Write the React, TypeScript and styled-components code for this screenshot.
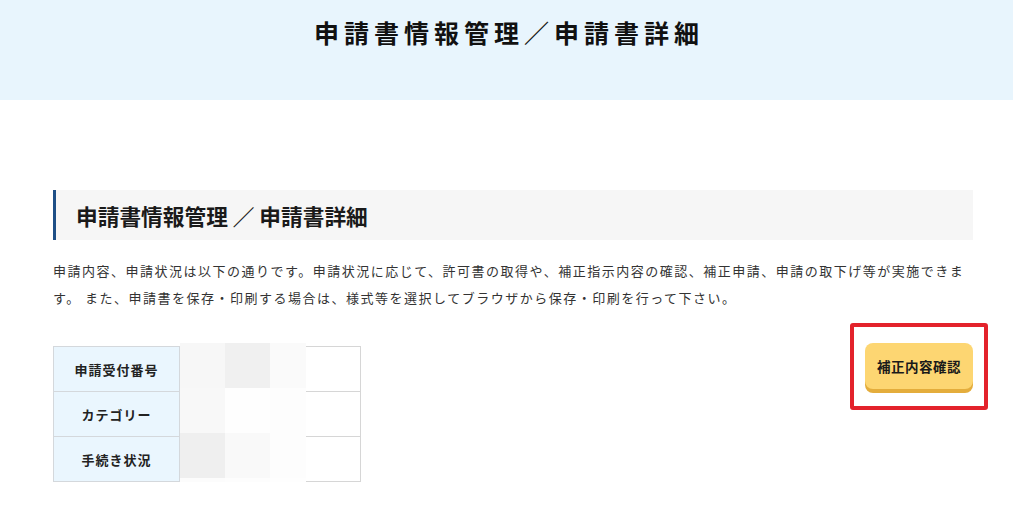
import styled, { createGlobalStyle } from "styled-components";

const GlobalStyle = createGlobalStyle`
  body {
    margin: 0;
    background: #ffffff;
    font-family: "Noto Sans CJK JP", "Noto Sans", sans-serif;
    color: #222222;
  }
`;

type Row = {
  label: string;
};

const rows: Row[] = [
  { label: "申請受付番号" },
  { label: "カテゴリー" },
  { label: "手続き状況" },
];

// ぼかし（モザイク）の色
const mosaic = [
  ["#f7f7f7", "#f0f0f0", "#fafafa"],
  ["#f8f8f8", "#fefefe", "#fdfdfd"],
  ["#efefef", "#f9f9f9", "#fdfdfd"],
  ["#fcfcfc", "#fdfdfd", "#fefefe"],
];

export default function App() {
  return (
    <>
      <GlobalStyle />
      <Header>
        <PageTitle>申請書情報管理／申請書詳細</PageTitle>
      </Header>
      <Contents>
        <SectionTitle>申請書情報管理 ／ 申請書詳細</SectionTitle>
        <Lead>
          申請内容、申請状況は以下の通りです。申請状況に応じて、許可書の取得や、補正指示内容の確認、補正申請、申請の取下げ等が実施できます。
          また、申請書を保存・印刷する場合は、様式等を選択してブラウザから保存・印刷を行って下さい。
        </Lead>
        <DetailRow>
          <TableWrap>
            <InfoTable>
              <tbody>
                {rows.map((row) => (
                  <tr key={row.label}>
                    <Th>{row.label}</Th>
                    <Td />
                  </tr>
                ))}
              </tbody>
            </InfoTable>
            <Mosaic>
              {mosaic.map((line, i) =>
                line.map((color, j) => (
                  <Tile key={`${i}-${j}`} $color={color} $short={i === 3} />
                ))
              )}
            </Mosaic>
          </TableWrap>
          <Highlight>
            <CorrectionButton type="button">補正内容確認</CorrectionButton>
          </Highlight>
        </DetailRow>
      </Contents>
    </>
  );
}

const Header = styled.header`
  height: 100px;
  background: #e8f5fd;
  display: flex;
  justify-content: center;
  padding-top: 13px;
  box-sizing: border-box;
`;

const PageTitle = styled.h1`
  margin: 0 0 0 5px;
  font-size: 25px;
  font-weight: 700;
  letter-spacing: 5px;
  line-height: 38px;
  color: #111111;
`;

const Contents = styled.main`
  width: 920px;
  margin: 90px 0 0 53px;
`;

const SectionTitle = styled.h2`
  margin: 0;
  height: 50px;
  display: flex;
  align-items: center;
  padding-left: 20px;
  background: #f6f6f6;
  border-left: 3px solid #1e4f86;
  font-size: 21.7px;
  font-weight: 700;
  color: #1a1a1a;
`;

const Lead = styled.p`
  margin: 17px 0 0;
  font-size: 13px;
  line-height: 27px;
  letter-spacing: 1.5px;
  color: #333333;
`;

const DetailRow = styled.div`
  margin-top: 32px;
  display: flex;
  justify-content: space-between;
  align-items: flex-start;
`;

const TableWrap = styled.div`
  position: relative;
  margin-top: 3px;
`;

const InfoTable = styled.table`
  border-collapse: collapse;
  width: 308px;
`;

const Th = styled.th`
  width: 125px;
  height: 44px;
  padding: 0;
  background: #eaf6fe;
  border: 1px solid #d4d8dc;
  font-size: 13px;
  font-weight: 700;
  letter-spacing: 1px;
  color: #222222;
`;

const Td = styled.td`
  border: 1px solid #d6d6d6;
  background: #ffffff;
`;

const Mosaic = styled.div`
  position: absolute;
  left: 127px;
  top: -3px;
  display: grid;
  grid-template-columns: 45px 45px 36px;
  grid-auto-rows: 45px;
  pointer-events: none;
`;

const Tile = styled.div<{ $color: string; $short?: boolean }>`
  background: ${({ $color }) => $color};
  height: ${({ $short }) => ($short ? "12px" : "45px")};
`;

const Highlight = styled.div`
  position: relative;

  &::after {
    content: "";
    position: absolute;
    inset: -20px -15px -17px -15px;
    border: 4px solid #e3222b;
    border-radius: 3px;
    pointer-events: none;
  }
`;

const CorrectionButton = styled.button`
  width: 108px;
  height: 46px;
  margin-bottom: 4px;
  border: none;
  border-radius: 8px;
  background: #fdd672;
  box-shadow: 0 4px 0 #e4ad3c;
  font-family: inherit;
  font-size: 13.5px;
  font-weight: 700;
  color: #1a1a1a;
  letter-spacing: 0.5px;
  cursor: pointer;
`;
